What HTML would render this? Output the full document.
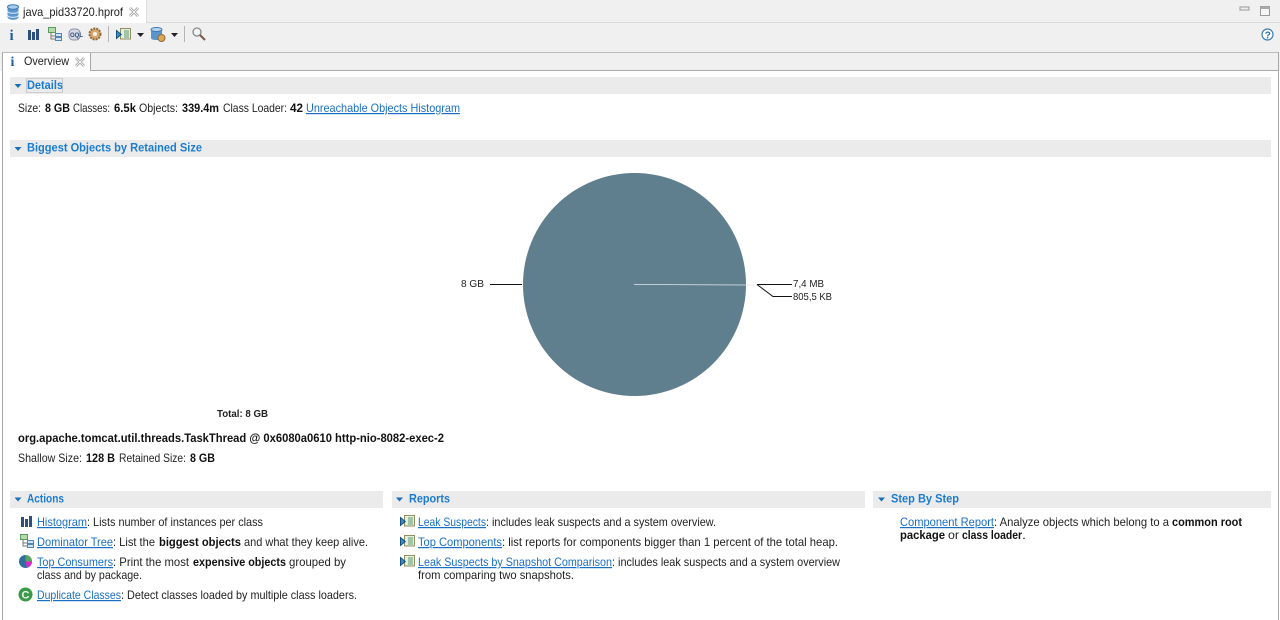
<!DOCTYPE html>
<html><head><meta charset="utf-8"><style>
html,body{margin:0;padding:0;width:1280px;height:620px;overflow:hidden;background:#fff}
svg{display:block}
text{font-family:"Liberation Sans",sans-serif;font-size:12px;fill:#222}
.b{font-weight:700;fill:#111}
.l{fill:#1a6fc4;text-decoration:underline}
.h{font-weight:700;fill:#1a7cd2}
.s{font-size:10.5px;fill:#222}
</style></head><body>
<svg width="1280" height="620" viewBox="0 0 1280 620" xmlns="http://www.w3.org/2000/svg">
<defs>
<g id="rep"><rect x="4.500" y="0.500" width="10" height="10.500" fill="#e4eedd" stroke="#8f8f60"/><path d="M8 3h5M8 5h5M8 7h5M8 9h5" stroke="#5c9a6e"/><path d="M0 1.500L6 6.500 0 11.500z" fill="#14507f"/><path d="M1 3.500L4.200 6.500 1 9.500z" fill="#3f8fc4"/></g>
<g id="dom"><rect x="0.500" y="0.500" width="7" height="5" fill="#b5d9a8" stroke="#5a9a60"/><path d="M3 6v6h4M3 9h4" stroke="#777" fill="none"/><rect x="7.500" y="6.500" width="6" height="3" fill="#cfe3f3" stroke="#4f86b8"/><rect x="7.500" y="10.500" width="6" height="3" fill="#cfe3f3" stroke="#4f86b8"/></g>
<g id="hist"><rect x="0" y="1" width="3" height="10" fill="#2c4f7c"/><rect x="4" y="3" width="3" height="8" fill="#2c4f7c"/><rect x="8" y="0" width="3" height="11" fill="#2c4f7c"/></g>
</defs>

<!-- chrome -->
<rect x="0" y="0" width="1280" height="52" fill="#f0f0f0"/>
<rect x="0" y="0" width="146" height="23" fill="#fff"/>
<rect x="146" y="0" width="1" height="22" fill="#dcdcdc"/>
<rect x="146" y="22" width="1134" height="1" fill="#dadada"/>
<rect x="0" y="52" width="1280" height="19" fill="#f0f0f0"/>
<rect x="2" y="52" width="1276" height="1" fill="#bcbcbc"/>
<rect x="2" y="70" width="1276" height="1" fill="#a8a8a8"/>
<rect x="2" y="52" width="1" height="568" fill="#a8a8a8"/>
<rect x="1278" y="52" width="1" height="568" fill="#a8a8a8"/>
<rect x="3" y="53" width="87" height="18" fill="#fff"/>
<rect x="90" y="53" width="1" height="18" fill="#a8a8a8"/>

<!-- file tab -->
<g>
<path d="M7.500 7v10c0 1.700 2.500 2.800 5.500 2.800s5.500-1.100 5.500-2.800V7z" fill="#5a94cc"/>
<ellipse cx="13" cy="7" rx="5.500" ry="2.300" fill="#a8cdea" stroke="#3f7ab5"/>
<path d="M7.500 11c0 1.500 2.500 2.300 5.500 2.300s5.500-.8 5.500-2.300M7.500 15c0 1.500 2.500 2.300 5.500 2.300s5.500-.8 5.500-2.300" stroke="#dcecf8" fill="none"/>
</g>
<text x="23" y="16" textLength="100" lengthAdjust="spacingAndGlyphs">java_pid33720.hprof</text>
<path d="M130 8l8 8M138 8l-8 8" stroke="#909090" stroke-width="2.600"/>
<path d="M130 8l8 8M138 8l-8 8" stroke="#fff" stroke-width="1"/>

<!-- window buttons -->
<rect x="1240" y="7" width="9" height="3" fill="#eee" stroke="#999"/>
<rect x="1260.500" y="6.500" width="9" height="9" fill="#f6f6f6" stroke="#999"/>
<rect x="1260.500" y="6.500" width="9" height="2.500" fill="#aaa"/>

<!-- toolbar -->
<text x="9.500" y="40" style="font-family:'Liberation Serif',serif;font-size:15px;font-weight:700;fill:#1d5f9e">i</text>
<use href="#hist" x="28" y="29"/>
<use href="#dom" x="48" y="27"/>
<rect x="69" y="29" width="11" height="11" rx="4" fill="#d5d8e4" stroke="#8a8fa8"/>
<text x="70" y="37" style="font-size:6px;font-weight:700;fill:#2c4f7c">OQL</text>
<circle cx="95" cy="34" r="5.500" fill="#d8a86a" stroke="#8f6b3c" stroke-dasharray="2 1" stroke-width="2"/>
<circle cx="95" cy="34" r="2" fill="#f3f3f3"/>
<rect x="108" y="26" width="1" height="16" fill="#b5b5b5"/>
<use href="#rep" x="116" y="28"/>
<path d="M137 33h7l-3.500 4z" fill="#222"/>
<g transform="translate(151,27)">
<path d="M0 2v9c0 1.500 2.500 2 5.500 2s5.500-.5 5.500-2V2z" fill="#5a94cc"/><ellipse cx="5.500" cy="2.500" rx="5.500" ry="2" fill="#b5d5ee" stroke="#3f7ab5"/>
<circle cx="10.500" cy="11" r="3.500" fill="#d9a955" stroke="#8f6b3c"/>
</g>
<path d="M171 33h7l-3.500 4z" fill="#222"/>
<rect x="184" y="26" width="1" height="16" fill="#b5b5b5"/>
<circle cx="197" cy="32" r="4" fill="#f2f5f7" stroke="#888" stroke-width="1.300"/>
<path d="M200 35l5 5" stroke="#7a5a4a" stroke-width="2"/>
<circle cx="1267.500" cy="34.500" r="5.500" fill="#fff" stroke="#3d7fb8" stroke-width="1.200"/>
<text x="1264.800" y="38.500" style="font-size:10px;font-weight:700;fill:#2d6ea8">?</text>

<!-- inner tab -->
<text x="10.500" y="66" style="font-family:'Liberation Serif',serif;font-size:14px;font-weight:700;fill:#1d5f9e">i</text>
<text x="24" y="65" textLength="45" lengthAdjust="spacingAndGlyphs">Overview</text>
<path d="M76 58l8 8M84 58l-8 8" stroke="#909090" stroke-width="2.600"/>
<path d="M76 58l8 8M84 58l-8 8" stroke="#fff" stroke-width="1"/>

<!-- section headers -->
<rect x="10" y="77" width="1261" height="17" fill="#ebebeb"/>
<rect x="10" y="140" width="1261" height="17" fill="#ebebeb"/>
<rect x="10" y="491" width="373" height="17" fill="#ebebeb"/>
<rect x="392" y="491" width="473" height="17" fill="#ebebeb"/>
<rect x="873" y="491" width="398" height="17" fill="#ebebeb"/>
<path d="M14.500 84h7l-3.500 4z" fill="#1a6fb8"/>
<path d="M14.500 147h7l-3.500 4z" fill="#1a6fb8"/>
<path d="M14.500 497.500h7l-3.500 4z" fill="#1a6fb8"/>
<path d="M396 497.500h7l-3.500 4z" fill="#1a6fb8"/>
<path d="M878 497.500h7l-3.500 4z" fill="#1a6fb8"/>
<text class="h" x="27" y="89" textLength="36" lengthAdjust="spacingAndGlyphs">Details</text>
<rect x="26.500" y="78.500" width="36" height="14" fill="none" stroke="#777" stroke-width=".6" stroke-dasharray="1 1"/>
<text class="h" x="27" y="151.500" textLength="175" lengthAdjust="spacingAndGlyphs">Biggest Objects by Retained Size</text>
<text class="h" x="27" y="502.500" textLength="37" lengthAdjust="spacingAndGlyphs">Actions</text>
<text class="h" x="409" y="502.500" textLength="41" lengthAdjust="spacingAndGlyphs">Reports</text>
<text class="h" x="891" y="502.500" textLength="68" lengthAdjust="spacingAndGlyphs">Step By Step</text>

<!-- details line -->
<text x="18" y="112" textLength="23" lengthAdjust="spacingAndGlyphs">Size:</text>
<text class="b" x="45" y="112" textLength="25" lengthAdjust="spacingAndGlyphs">8 GB</text>
<text x="73" y="112" textLength="37" lengthAdjust="spacingAndGlyphs">Classes:</text>
<text class="b" x="114" y="112" textLength="22" lengthAdjust="spacingAndGlyphs">6.5k</text>
<text x="139" y="112" textLength="39" lengthAdjust="spacingAndGlyphs">Objects:</text>
<text class="b" x="182" y="112" textLength="37" lengthAdjust="spacingAndGlyphs">339.4m</text>
<text x="223" y="112" textLength="64" lengthAdjust="spacingAndGlyphs">Class Loader:</text>
<text class="b" x="290" y="112" textLength="13" lengthAdjust="spacingAndGlyphs">42</text>
<text class="l" x="306" y="112" textLength="154" lengthAdjust="spacingAndGlyphs">Unreachable Objects Histogram</text>

<!-- pie -->
<circle cx="634.500" cy="284.500" r="111.500" fill="#5f7e8e"/>
<path d="M634 284.500L746 285" stroke="#e4eaee" stroke-width=".7"/>
<path d="M746 285h11" stroke="#eee" stroke-width="1"/>
<path d="M490 284.500h32" stroke="#111"/>
<path d="M757 284.500h35M757 284.500l16 12h19" stroke="#111" fill="none"/>
<text class="s" x="461" y="287" textLength="23" lengthAdjust="spacingAndGlyphs">8 GB</text>
<text class="s" x="793" y="287" textLength="31" lengthAdjust="spacingAndGlyphs">7,4 MB</text>
<text class="s" x="793" y="300" textLength="39" lengthAdjust="spacingAndGlyphs">805,5 KB</text>
<text class="s" x="217" y="417" textLength="51" lengthAdjust="spacingAndGlyphs" style="font-weight:700">Total: 8 GB</text>

<!-- object -->
<text class="b" x="18" y="442" textLength="426" lengthAdjust="spacingAndGlyphs">org.apache.tomcat.util.threads.TaskThread @ 0x6080a0610 http-nio-8082-exec-2</text>
<text x="18" y="462" textLength="64" lengthAdjust="spacingAndGlyphs">Shallow Size:</text>
<text class="b" x="86" y="462" textLength="29" lengthAdjust="spacingAndGlyphs">128 B</text>
<text x="119" y="462" textLength="67" lengthAdjust="spacingAndGlyphs">Retained Size:</text>
<text class="b" x="190" y="462" textLength="25" lengthAdjust="spacingAndGlyphs">8 GB</text>

<!-- actions -->
<use href="#hist" x="21" y="516"/>
<use href="#dom" x="20" y="534"/>
<circle cx="25.500" cy="561.500" r="6.500" fill="#2e6f9e"/>
<path d="M25.500 561.500L25.500 555A6.500 6.500 0 0 1 32 561.500z" fill="#5ba45b"/>
<path d="M25.500 561.500L32 561.500A6.500 6.500 0 0 1 27 567.800z" fill="#d828c8"/>
<circle cx="25.500" cy="594.500" r="7" fill="#3a9a4a"/>
<text x="21.500" y="598.500" style="font-size:11px;font-weight:700;fill:#eef7ee">C</text>

<text class="l" x="37" y="526" textLength="50" lengthAdjust="spacingAndGlyphs">Histogram</text>
<text x="87" y="526" textLength="176" lengthAdjust="spacingAndGlyphs">: Lists number of instances per class</text>
<text class="l" x="37" y="546" textLength="76" lengthAdjust="spacingAndGlyphs">Dominator Tree</text>
<text x="113" y="546" textLength="42" lengthAdjust="spacingAndGlyphs">: List the</text>
<text class="b" x="159" y="546" textLength="82" lengthAdjust="spacingAndGlyphs">biggest objects</text>
<text x="244" y="546" textLength="124" lengthAdjust="spacingAndGlyphs">and what they keep alive.</text>
<text class="l" x="37" y="566" textLength="76" lengthAdjust="spacingAndGlyphs">Top Consumers</text>
<text x="113" y="566" textLength="76" lengthAdjust="spacingAndGlyphs">: Print the most</text>
<text class="b" x="193" y="566" textLength="93" lengthAdjust="spacingAndGlyphs">expensive objects</text>
<text x="289" y="566" textLength="57" lengthAdjust="spacingAndGlyphs">grouped by</text>
<text x="37" y="579" textLength="105" lengthAdjust="spacingAndGlyphs">class and by package.</text>
<text class="l" x="37" y="599" textLength="84" lengthAdjust="spacingAndGlyphs">Duplicate Classes</text>
<text x="121" y="599" textLength="236" lengthAdjust="spacingAndGlyphs">: Detect classes loaded by multiple class loaders.</text>

<!-- reports -->
<use href="#rep" x="400" y="515"/>
<use href="#rep" x="400" y="535"/>
<use href="#rep" x="400" y="555"/>
<text class="l" x="418" y="526" textLength="68" lengthAdjust="spacingAndGlyphs">Leak Suspects</text>
<text x="486" y="526" textLength="230" lengthAdjust="spacingAndGlyphs">: includes leak suspects and a system overview.</text>
<text class="l" x="418" y="546" textLength="84" lengthAdjust="spacingAndGlyphs">Top Components</text>
<text x="502" y="546" textLength="336" lengthAdjust="spacingAndGlyphs">: list reports for components bigger than 1 percent of the total heap.</text>
<text class="l" x="418" y="566" textLength="194" lengthAdjust="spacingAndGlyphs">Leak Suspects by Snapshot Comparison</text>
<text x="612" y="566" textLength="228" lengthAdjust="spacingAndGlyphs">: includes leak suspects and a system overview</text>
<text x="418" y="579" textLength="156" lengthAdjust="spacingAndGlyphs">from comparing two snapshots.</text>

<!-- step by step -->
<text class="l" x="900" y="526" textLength="94" lengthAdjust="spacingAndGlyphs">Component Report</text>
<text x="994" y="526" textLength="175" lengthAdjust="spacingAndGlyphs">: Analyze objects which belong to a</text>
<text class="b" x="1172" y="526" textLength="70" lengthAdjust="spacingAndGlyphs">common root</text>
<text class="b" x="900" y="539" textLength="45" lengthAdjust="spacingAndGlyphs">package</text>
<text x="948" y="539" textLength="11" lengthAdjust="spacingAndGlyphs">or</text>
<text class="b" x="962" y="539" textLength="60" lengthAdjust="spacingAndGlyphs">class loader</text>
<text x="1022" y="539" textLength="4" lengthAdjust="spacingAndGlyphs">.</text>
</svg>
</body></html>
